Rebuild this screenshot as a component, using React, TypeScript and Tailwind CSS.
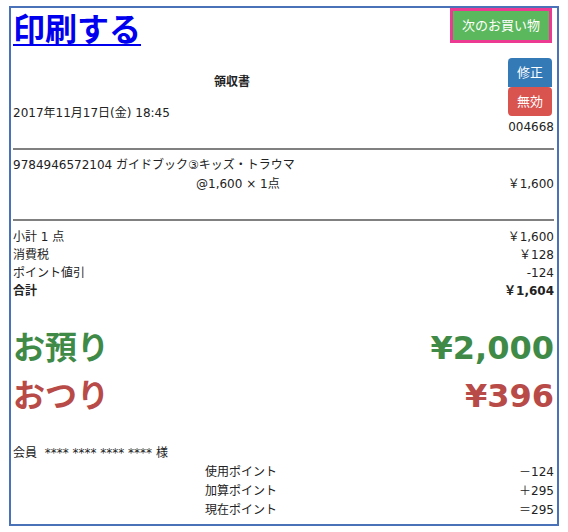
const font = { fontFamily: '"DejaVu Sans", "Noto Sans CJK JP", sans-serif' };

function Row({ label, value, bold }: { label: string; value: string; bold?: boolean }) {
  return (
    <div className={`flex justify-between leading-[18px] ${bold ? 'font-bold' : ''}`}>
      <span>{label}</span>
      <span>{value}</span>
    </div>
  );
}

function PointRow({ label, value }: { label: string; value: string }) {
  return (
    <div className="flex leading-[19px]">
      <span className="w-[192px]" />
      <span className="flex-1">{label}</span>
      <span>{value}</span>
    </div>
  );
}

export default function App() {
  return (
    <div className="bg-white pl-[9px] pt-[6px] text-[12px] text-[#222]" style={font}>
      <div className="w-[550px] border-2 border-[#4a72b8] pl-[2px] pr-[3px] pb-[4px]">
        {/* header */}
        <div className="flex items-start justify-between">
          <a
            href="#"
            className="mt-[2px] text-[32px] font-bold leading-[40px] text-[#0000ee] underline decoration-2 underline-offset-[3px]"
          >
            印刷する
          </a>
          <div className="mr-[2px] border-[3px] border-[#ec3a93] bg-[#5cb85c] px-[9px] text-[13px] leading-[29px] text-white">
            次のお買い物
          </div>
        </div>

        {/* title / date / actions */}
        <div className="flex">
          <div className="flex-1">
            <div className="mt-[23px] w-[438px] text-center font-bold leading-[18px]">領収書</div>
            <div className="mt-[13px] leading-[18px]">2017年11月17日(金) 18:45</div>
          </div>
          <div className="mt-[8px] flex flex-col items-end">
            <div className="mr-[2px] rounded-t-[4px] bg-[#337ab7] px-[9px] text-[13px] leading-[29px] text-white">修正</div>
            <div className="mr-[2px] rounded-[4px] bg-[#d9534f] px-[9px] text-[13px] leading-[29px] text-white">無効</div>
            <div className="mt-[2px] leading-[18px]">004668</div>
          </div>
        </div>

        <div className="mt-[12px] h-[2px] bg-[#808080]" />

        {/* item */}
        <div className="mt-[6px] leading-[19px]">9784946572104 ガイドブック③キッズ・トラウマ</div>
        <div className="flex leading-[19px]">
          <span className="w-[183px]" />
          <span className="flex-1">@1,600 × 1点</span>
          <span>￥1,600</span>
        </div>

        <div className="mt-[25px] h-[2px] bg-[#808080]" />

        {/* totals */}
        <div className="mt-[7px]">
          <Row label="小計 1 点" value="￥1,600" />
          <Row label="消費税" value="￥128" />
          <Row label="ポイント値引" value="-124" />
          <Row label="合計" value="￥1,604" bold />
        </div>

        <div className="mt-[24px] text-[32px] font-bold leading-[48px]">
          <div className="flex justify-between text-[#3f8a47]">
            <span>お預り</span>
            <span>¥2,000</span>
          </div>
          <div className="flex justify-between text-[#b84a47]">
            <span>おつり</span>
            <span>¥396</span>
          </div>
        </div>

        {/* member */}
        <div className="mt-[24px]">
          <div className="leading-[19px]">会員&nbsp; **** **** **** **** 様</div>
          <PointRow label="使用ポイント" value="－124" />
          <PointRow label="加算ポイント" value="＋295" />
          <PointRow label="現在ポイント" value="＝295" />
        </div>
      </div>
    </div>
  );
}
